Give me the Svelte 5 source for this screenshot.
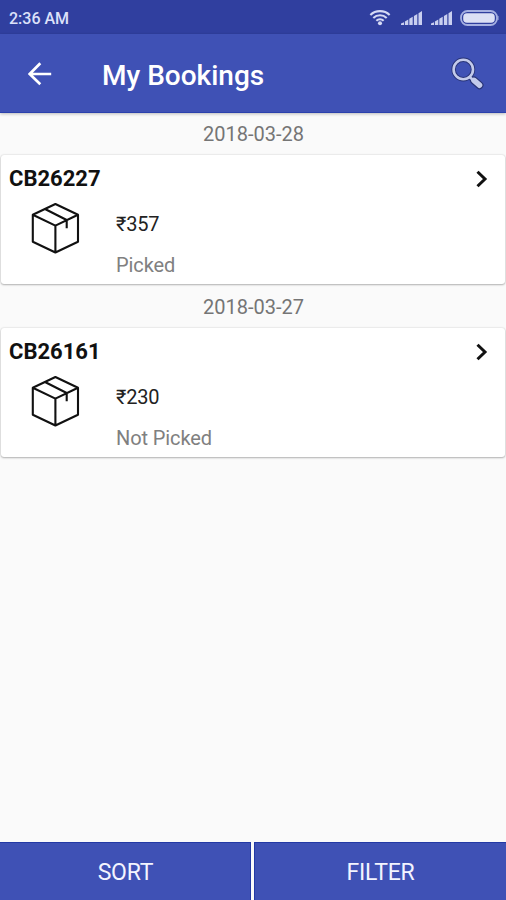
<script>
  const bookings = [
    { date: '2018-03-28', id: 'CB26227', price: '₹357', status: 'Picked' },
    { date: '2018-03-27', id: 'CB26161', price: '₹230', status: 'Not Picked' }
  ];
</script>

{#snippet signal()}
  <svg class="signal" width="22" height="16" viewBox="0 0 22 16">
    <path d="M0 15V13.6L3 12.2V15ZM3.9 15V11.4L7.3 9.5V15ZM8.3 15V8.8L11.7 6.8V15ZM12.9 15V6L16.3 3.9V15ZM17.5 15V3.2L21 1V15Z" fill="#c9cff0" />
  </svg>
{/snippet}

<div class="screen">
  <div class="statusbar">
    <span class="time">2:36 AM</span>
    <svg class="wifi" width="22" height="17" viewBox="0 0 24 18">
      <g fill="none" stroke="#d5daf5" stroke-width="2.3">
        <path d="M1.5 6.2C7.2.7 16.8.7 22.5 6.2" />
        <path d="M4.7 9.5C8.8 5.6 15.2 5.6 19.3 9.5" />
        <path d="M8 12.6C10.3 10.5 13.7 10.5 16 12.6" />
      </g>
      <circle cx="12" cy="15.2" r="2.2" fill="#d5daf5" />
    </svg>
    {@render signal()}
    {@render signal()}
    <svg class="battery" width="39" height="16" viewBox="0 0 39 16">
      <rect x="1" y="1" width="36" height="14" rx="6.5" fill="none" stroke="#a6b0e2" stroke-width="1.8" />
      <rect x="3.2" y="3.2" width="31.6" height="9.6" rx="3.8" fill="#dce0f5" />
      <path d="M37.5 6H38.5V10H37.5Z" fill="#a6b0e2" />
    </svg>
  </div>

  <header>
    <svg class="back" width="24" height="24" viewBox="0 0 24 24">
      <path d="M12.3 1.2L1.7 12L12.3 22.3M2 12H23.2" fill="none" stroke="#fff" stroke-width="2.7" />
    </svg>
    <h1>My Bookings</h1>
    <svg class="search" width="34" height="36" viewBox="0 0 34 36">
      <g fill="none" stroke="#293477" stroke-linecap="round">
        <circle cx="12.3" cy="13.5" r="9.7" stroke-width="4.4" />
        <path d="M18.7 21L22 24" stroke-width="5" />
        <path d="M23 24.4L28.5 29.2" stroke-width="8" />
      </g>
      <g fill="none" stroke="#c3caeb" stroke-linecap="round">
        <circle cx="12.3" cy="13.5" r="9.7" stroke-width="2.6" />
        <path d="M18.7 21L22 24" stroke-width="2.6" />
        <path d="M23 24.4L28.5 29.2" stroke-width="5.6" />
      </g>
    </svg>
  </header>

  <main>
    {#each bookings as b}
      <div class="date">{b.date}</div>
      <article>
        <div class="top">
          <strong>{b.id}</strong>
          <svg width="14" height="20" viewBox="0 0 14 20">
            <path d="M2.5 2.7L10 10L2.5 17.3" fill="none" stroke="#111" stroke-width="3" />
          </svg>
        </div>
        <div class="body">
          <svg class="box" width="50" height="52" viewBox="0 0 50 52">
            <path d="M25.4 2L48 12.7V39.8L25.4 50.5L2.8 39.8V12.7ZM2.8 12.7L25.4 23.6L48 12.7M25.4 23.6V50.5M15 7L36.7 18V26.2" fill="none" stroke="#111" stroke-width="2.1" stroke-linejoin="round" />
          </svg>
          <div class="info">
            <span class="price">{b.price}</span>
            <span class="state">{b.status}</span>
          </div>
        </div>
      </article>
    {/each}
  </main>

  <footer>
    <button class="sort">SORT</button>
    <button class="filter">FILTER</button>
  </footer>
</div>

<style>
  .screen {
    width: 506px;
    height: 900px;
    display: flex;
    flex-direction: column;
    overflow: hidden;
    background: #fafafa;
    font-family: Roboto, "Noto Sans", sans-serif;
  }
  .statusbar {
    height: 34px;
    box-sizing: border-box;
    padding: 1px 7px 0 9px;
    display: flex;
    align-items: center;
    background: #303f9f;
    color: #dce1fa;
  }
  .time { flex: 1; font-size: 16px; font-weight: 500; line-height: 32px; padding-top: 2px; }
  .wifi { margin-right: 10px; }
  .signal { margin-right: 8px; }
  .signal + .signal { margin-right: 7px; }
  header {
    height: 79px;
    box-sizing: border-box;
    flex: none;
    display: flex;
    align-items: center;
    padding: 0 21px 0 28px;
    background: #3f51b5;
    border-bottom: 1px solid #2b41ad;
    box-shadow: 0 1px 3px rgba(0, 0, 0, 0.25);
  }
  .back { margin-top: 2px; }
  h1 { flex: 1; margin: 5px 0 0 50px; color: #fff; font-size: 28px; line-height: 36px; font-weight: 500; }
  .search { margin-top: 1px; }
  main { flex: 1; }
  .date {
    height: 42px;
    line-height: 43px;
    text-align: center;
    font-size: 20px;
    padding-left: 1px;
    letter-spacing: -0.02px;
    color: #757575;
  }
  article {
    height: 129px;
    margin: 0 1px 2px;
    box-sizing: border-box;
    padding: 7px 8px 0;
    border-radius: 3px;
    background: #fff;
    box-shadow: 0 0 2px rgba(0, 0, 0, 0.18), 0 1px 2px rgba(0, 0, 0, 0.25);
  }
  .top {
    height: 34px;
    display: flex;
    justify-content: space-between;
    align-items: center;
    padding-right: 8px;
  }
  strong { font-size: 22px; line-height: 34px; font-weight: 700; color: #111; }
  .body { display: flex; }
  .box { margin: 6px 0 0 21px; }
  .info { display: flex; flex-direction: column; margin-left: 36px; font-size: 20px; }
  .price { line-height: 30px; margin-top: 13px; color: #222; letter-spacing: -0.2px; }
  .state { line-height: 30px; margin-top: 11px; color: #808080; letter-spacing: -0.1px; }
  footer { height: 58px; display: flex; gap: 3px; }
  button {
    flex: 1;
    border: 0;
    border-top: 1px solid #2339a5;
    background: #3f51b5;
    color: #f3f4ff;
    font: 400 23px/54px Roboto, sans-serif;
    padding: 3px 0 0;
    letter-spacing: -0.2px;
  }
  .sort { flex: 0 0 251px; padding-left: 1px; border-right: 1px solid #2339a5; }
  .filter { border-left: 1px solid #2339a5; }
</style>
